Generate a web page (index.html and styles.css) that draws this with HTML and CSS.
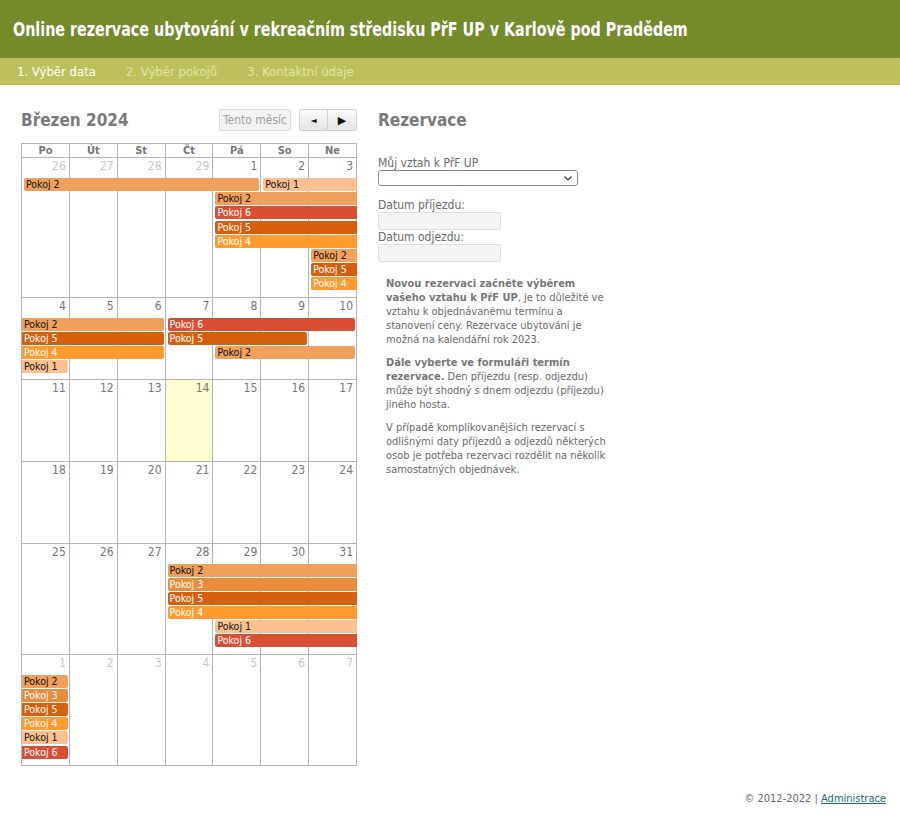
FILE: index.html
```html
<!DOCTYPE html>
<html lang="cs">
<head>
<meta charset="utf-8">
<title>Online rezervace ubytování</title>
<link rel="stylesheet" href="styles.css">
</head>
<body>
<header class="top">
  <h1>Online rezervace ubytování v rekreačním středisku PřF UP v Karlově pod Pradědem</h1>
</header>
<nav class="steps">
  <span class="step on">1. Výběr data</span>
  <span class="step">2. Výběr pokojů</span>
  <span class="step">3. Kontaktní údaje</span>
</nav>
<main class="content">
  <section class="cal">
    <div class="cal-toolbar">
      <h2 class="cal-title">Březen 2024</h2>
      <div class="btns">
        <button class="btn-today">Tento měsíc</button>
        <div class="nav-group">
          <button class="btn-nav prev">&#9668;</button>
          <button class="btn-nav next">&#9654;</button>
        </div>
      </div>
    </div>
    <div class="cal-grid">
      <div class="dow"><span>Po</span><span>Út</span><span>St</span><span>Čt</span><span>Pá</span><span>So</span><span>Ne</span></div>

      <div class="week lv8">
        <div class="cell c1 other">26</div><div class="cell c2 other">27</div><div class="cell c3 other">28</div><div class="cell c4 other">29</div><div class="cell c5">1</div><div class="cell c6">2</div><div class="cell c7">3</div>
        <div class="ev p2 r2 s1 e6">Pokoj 2</div>
        <div class="ev p1 r2 s6 e8 cr">Pokoj 1</div>
        <div class="ev p2 r3 s5 e8 cr">Pokoj 2</div>
        <div class="ev p6 r4 s5 e8 cr">Pokoj 6</div>
        <div class="ev p5 r5 s5 e8 cr">Pokoj 5</div>
        <div class="ev p4 r6 s5 e8 cr">Pokoj 4</div>
        <div class="ev p2 r7 s7 e8 cr">Pokoj 2</div>
        <div class="ev p5 r8 s7 e8 cr">Pokoj 5</div>
        <div class="ev p4 r9 s7 e8 cr">Pokoj 4</div>
      </div>

      <div class="week lv4">
        <div class="cell c1">4</div><div class="cell c2">5</div><div class="cell c3">6</div><div class="cell c4">7</div><div class="cell c5">8</div><div class="cell c6">9</div><div class="cell c7">10</div>
        <div class="ev p2 r2 s1 e4 cl">Pokoj 2</div>
        <div class="ev p6 r2 s4 e8">Pokoj 6</div>
        <div class="ev p5 r3 s1 e4 cl">Pokoj 5</div>
        <div class="ev p5 r3 s4 e7">Pokoj 5</div>
        <div class="ev p4 r4 s1 e4 cl">Pokoj 4</div>
        <div class="ev p2 r4 s5 e8">Pokoj 2</div>
        <div class="ev p1 r5 s1 e2 cl">Pokoj 1</div>
      </div>

      <div class="week lv0">
        <div class="cell c1">11</div><div class="cell c2">12</div><div class="cell c3">13</div><div class="cell c4 today">14</div><div class="cell c5">15</div><div class="cell c6">16</div><div class="cell c7">17</div>
      </div>

      <div class="week lv0">
        <div class="cell c1">18</div><div class="cell c2">19</div><div class="cell c3">20</div><div class="cell c4">21</div><div class="cell c5">22</div><div class="cell c6">23</div><div class="cell c7">24</div>
      </div>

      <div class="week lv6">
        <div class="cell c1">25</div><div class="cell c2">26</div><div class="cell c3">27</div><div class="cell c4">28</div><div class="cell c5">29</div><div class="cell c6">30</div><div class="cell c7">31</div>
        <div class="ev p2 r2 s4 e8 cr">Pokoj 2</div>
        <div class="ev p3 r3 s4 e8 cr">Pokoj 3</div>
        <div class="ev p5 r4 s4 e8 cr">Pokoj 5</div>
        <div class="ev p4 r5 s4 e8 cr">Pokoj 4</div>
        <div class="ev p1 r6 s5 e8 cr">Pokoj 1</div>
        <div class="ev p6 r7 s5 e8 cr">Pokoj 6</div>
      </div>

      <div class="week lv6">
        <div class="cell c1 other">1</div><div class="cell c2 other">2</div><div class="cell c3 other">3</div><div class="cell c4 other">4</div><div class="cell c5 other">5</div><div class="cell c6 other">6</div><div class="cell c7 other">7</div>
        <div class="ev p2 r2 s1 e2 cl">Pokoj 2</div>
        <div class="ev p3 r3 s1 e2 cl">Pokoj 3</div>
        <div class="ev p5 r4 s1 e2 cl">Pokoj 5</div>
        <div class="ev p4 r5 s1 e2 cl">Pokoj 4</div>
        <div class="ev p1 r6 s1 e2 cl">Pokoj 1</div>
        <div class="ev p6 r7 s1 e2 cl">Pokoj 6</div>
      </div>
    </div>
  </section>

  <section class="form">
    <h2 class="form-title">Rezervace</h2>
    <label class="lbl first" for="vztah">Můj vztah k PřF UP</label>
    <select id="vztah" class="sel"><option></option></select>
    <label class="lbl" for="prij">Datum příjezdu:</label>
    <input id="prij" class="inp" type="text" disabled>
    <label class="lbl tight" for="odj">Datum odjezdu:</label>
    <input id="odj" class="inp" type="text" disabled>
    <div class="info">
      <p><b>Novou rezervaci začněte výběrem vašeho vztahu k PřF UP</b>, je to důležité ve vztahu k objednávanému termínu a stanovení ceny. Rezervace ubytování je možná na kalendářní rok 2023.</p>
      <p><b>Dále vyberte ve formuláři termín rezervace.</b> Den příjezdu (resp. odjezdu) může být shodný s dnem odjezdu (příjezdu) jiného hosta.</p>
      <p>V případě komplikovanějších rezervací s odlišnými daty příjezdů a odjezdů některých osob je potřeba rezervaci rozdělit na několik samostatných objednávek.</p>
    </div>
  </section>
</main>
<footer class="foot">© 2012-2022 | <a href="#" class="admin">Administrace</a></footer>
</body>
</html>
```

FILE: styles.css
```css
* { box-sizing: border-box; }
body {
  margin: 0;
  font-family: "DejaVu Sans", sans-serif;
  font-stretch: condensed;
  color: #666;
  background: #fff;
}
.top {
  background: #758b29;
  height: 58px;
  display: flex;
  align-items: center;
  padding-left: 13px;
}
.top h1 {
  margin: 0;
  color: #fff;
  font-size: 20px;
  font-weight: bold;
  white-space: nowrap;
  transform: scaleX(0.795);
  transform-origin: left center;
}
.steps {
  background: #bec15b;
  height: 27px;
  display: flex;
  align-items: center;
  padding-left: 17px;
  gap: 30px;
  font-size: 13px;
}
.step { color: #e2e5a6; }
.step.on { color: #fff; }

.content {
  display: flex;
  align-items: flex-start;
  gap: 21px;
  padding: 24px 0 0 21px;
}
.cal { width: 336px; }
.cal-toolbar {
  display: flex;
  justify-content: space-between;
  align-items: center;
  height: 22px;
  margin-bottom: 12px;
}
.cal-title, .form-title {
  margin: 0;
  font-size: 17px;
  line-height: 22px;
  font-weight: bold;
  color: #7a7a7a;
}
.btns { display: flex; gap: 8px; }
.btn-today {
  width: 72px;
  height: 22px;
  padding: 0;
  border: 1px solid #ddd;
  border-radius: 2px;
  background: #f3f3f3;
  color: #a0a0a0;
  font-family: inherit;
  font-stretch: condensed;
  font-size: 12px;
}
.nav-group { display: flex; }
.btn-nav {
  width: 29px;
  height: 22px;
  padding: 0;
  border: 1px solid #d0d0d0;
  background: linear-gradient(#fafafa, #e4e4e4);
  color: #111;
  font-family: inherit;
}
.btn-nav.prev { border-radius: 2px 0 0 2px; font-size: 8px; }
.btn-nav.next { border-radius: 0 2px 2px 0; border-left: none; font-size: 11px; }

.cal-grid {
  border-left: 1px solid #b5b5b5;
  border-top: 1px solid #b5b5b5;
}
.dow {
  display: grid;
  grid-template-columns: repeat(7, 1fr);
}
.dow span {
  height: 14px;
  line-height: 13px;
  text-align: center;
  font-size: 11px;
  font-weight: bold;
  color: #777;
  border-right: 1px solid #b5b5b5;
  border-bottom: 1px solid #b5b5b5;
}
.week {
  display: grid;
  grid-template-columns: repeat(7, 1fr);
  min-height: 82px;
}
.lv0 { grid-template-rows: 20px 1fr; }
.lv4 { grid-template-rows: 20px repeat(4, 14.2px) minmax(5px, 1fr); }
.lv6 { grid-template-rows: 20px repeat(6, 14.2px) minmax(6px, 1fr); }
.lv8 { grid-template-rows: 20px repeat(8, 14.2px) minmax(6px, 1fr); }
.cell {
  grid-row: 1 / -1;
  border-right: 1px solid #b5b5b5;
  border-bottom: 1px solid #b5b5b5;
  text-align: right;
  padding: 1px 3px 0 0;
  font-size: 12px;
  line-height: 14px;
  color: #777;
}
.cell.other { color: #c8c8c8; }
.cell.today { background: #fdfdd0; }
.c1 { grid-column: 1; } .c2 { grid-column: 2; } .c3 { grid-column: 3; } .c4 { grid-column: 4; }
.c5 { grid-column: 5; } .c6 { grid-column: 6; } .c7 { grid-column: 7; }

.ev {
  height: 13px;
  margin: 0 2px;
  border-radius: 2px;
  font-size: 10.5px;
  line-height: 13px;
  padding-left: 2px;
  white-space: nowrap;
  overflow: hidden;
  color: #fff;
}
.ev.cl { margin-left: 0; border-top-left-radius: 0; border-bottom-left-radius: 0; }
.ev.cr { margin-right: 0; border-top-right-radius: 0; border-bottom-right-radius: 0; }
.r2 { grid-row: 2; } .r3 { grid-row: 3; } .r4 { grid-row: 4; } .r5 { grid-row: 5; }
.r6 { grid-row: 6; } .r7 { grid-row: 7; } .r8 { grid-row: 8; } .r9 { grid-row: 9; }
.s1 { grid-column-start: 1; } .s4 { grid-column-start: 4; } .s5 { grid-column-start: 5; }
.s6 { grid-column-start: 6; } .s7 { grid-column-start: 7; }
.e2 { grid-column-end: 2; } .e4 { grid-column-end: 4; } .e6 { grid-column-end: 6; }
.e7 { grid-column-end: 7; } .e8 { grid-column-end: 8; }
.p1 { background: #fdc18f; color: #111; }
.p2 { background: #f0a05a; color: #111; }
.p3 { background: #e98c3e; }
.p4 { background: #fe9a2e; }
.p5 { background: #d65f0e; }
.p6 { background: #d94f34; }

.form {
  display: flex;
  flex-direction: column;
  align-items: flex-start;
  width: 240px;
}
.lbl {
  font-size: 12px;
  line-height: 14px;
  color: #6a6a6a;
  margin-top: 12px;
}
.lbl.first { margin-top: 25px; }
.lbl.tight { margin-top: 0; }
.sel {
  -webkit-appearance: none;
  appearance: none;
  width: 200px;
  height: 16px;
  font-size: 10px;
  padding: 0;
  border: 1px solid #8a8a8a;
  border-radius: 3px;
  background: #fff url("data:image/svg+xml;utf8,<svg xmlns='http://www.w3.org/2000/svg' width='8' height='5' viewBox='0 0 8 5'><path d='M0.5 0.5 L4 4 L7.5 0.5' fill='none' stroke='%23333' stroke-width='1.1'/></svg>") no-repeat right 5px center;
}
.inp {
  width: 123px;
  height: 18px;
  border: 1px solid #ddd;
  border-radius: 2px;
  background: #f5f5f5;
}
.info {
  margin-top: 15px;
  padding-left: 8px;
  width: 230px;
  font-size: 11px;
  line-height: 14px;
  color: #6a6a6a;
}
.info p { margin: 0 0 9px; }
.info b { color: #777; }
.foot {
  text-align: right;
  padding-right: 14px;
  margin-top: 25px;
  font-size: 11px;
  line-height: 15px;
  color: #666;
}
.admin { color: #1d6b6b; }
```
